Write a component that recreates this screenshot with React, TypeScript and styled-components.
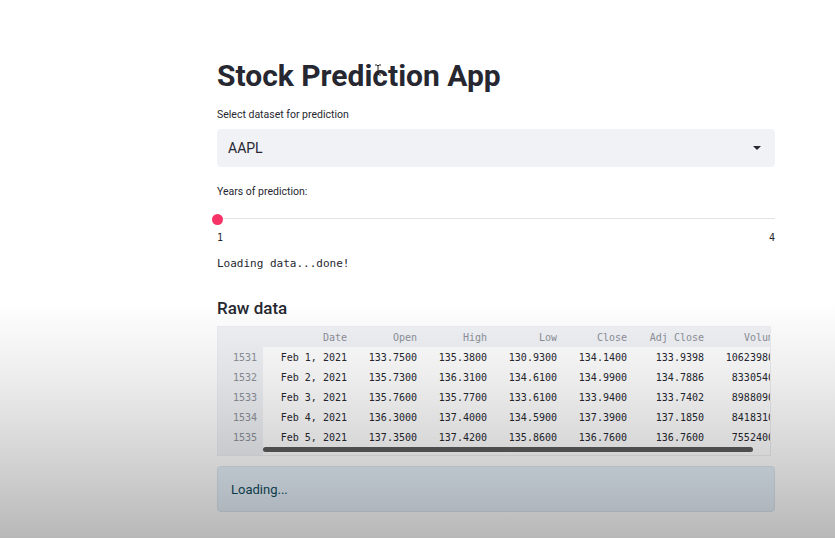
import React from "react";
import styled, { createGlobalStyle } from "styled-components";

const Global = createGlobalStyle`
  html, body { margin: 0; padding: 0; background: #ffffff; }
  body { width: 835px; height: 538px; overflow: hidden; }
  #root { width: 835px; height: 538px; position: relative; }
`;

const Page = styled.div`
  width: 835px;
  height: 538px;
  position: relative;
  background: #ffffff;
  overflow: hidden;
  font-family: Roboto, "Noto Sans", sans-serif;
  color: #262730;
`;

const Main = styled.main`
  width: 558px;
  margin-left: 217px;
  padding-top: 55px;
  display: flex;
  flex-direction: column;
`;

const Title = styled.h1`
  margin: 0;
  font-family: Roboto, "Noto Sans", sans-serif;
  font-size: 30px;
  font-weight: 700;
  line-height: 42px;
  letter-spacing: 0px;
  color: #262730;
`;

const Label = styled.label`
  display: block;
  font-size: 10.5px;
  line-height: 16px;
  color: #262730;
`;

const Field = styled.div<{ $top: number }>`
  margin-top: ${(p) => p.$top}px;
  display: flex;
  flex-direction: column;
`;

const Select = styled.div`
  margin-top: 6px;
  height: 38px;
  border-radius: 4px;
  background: #f0f2f6;
  display: flex;
  align-items: center;
  justify-content: space-between;
  padding: 0 14px 0 11px;
  font-size: 14px;
  color: #262730;
`;

const Caret = styled.span`
  width: 0;
  height: 0;
  border-left: 4px solid transparent;
  border-right: 4px solid transparent;
  border-top: 4px solid #262730;
`;

const SliderWrap = styled.div`
  margin-top: 11px;
  height: 33px;
  display: flex;
  flex-direction: column;
`;

const Track = styled.div`
  position: relative;
  height: 3px;
  margin-top: 7px;
  border-radius: 2px;
  background: #e3e3e6;
`;

const Thumb = styled.span`
  position: absolute;
  left: -5px;
  top: -4px;
  width: 11px;
  height: 11px;
  border-radius: 50%;
  background: #f63366;
`;

const TickRow = styled.div`
  margin-top: 13px;
  display: flex;
  justify-content: space-between;
  font-family: "DejaVu Sans Mono", monospace;
  font-size: 10px;
  line-height: 12px;
  color: #262730;
`;

const Mono = styled.div`
  margin-top: 13px;
  font-family: "DejaVu Sans Mono", monospace;
  font-size: 11px;
  line-height: 14px;
  color: #262730;
`;

const H2 = styled.h2`
  margin: 25px 0 0;
  font-size: 17px;
  font-weight: 500;
  line-height: 24px;
  color: #262730;
`;

const TableFrame = styled.div`
  margin-top: 6px;
  width: 552px;
  height: 128px;
  border: 1px solid #eceef2;
  position: relative;
  overflow: hidden;
  background: #ffffff;
  font-family: "DejaVu Sans Mono", monospace;
  font-size: 10px;
`;

const Grid = styled.div`
  display: grid;
  grid-template-columns: 45px 84px 70px 70px 70px 70px 77px 76px;
  grid-auto-rows: 20px;
`;

const Cell = styled.div<{ $kind: "corner" | "head" | "index" | "data" }>`
  display: flex;
  align-items: center;
  justify-content: flex-end;
  padding-right: ${(p) => (p.$kind === "index" || p.$kind === "corner" ? 6 : 0)}px;
  white-space: nowrap;
  background: ${(p) => (p.$kind === "data" ? "#ffffff" : "#f0f2f6")};
  color: ${(p) => (p.$kind === "data" ? "#262730" : "#8d9099")};
`;

const ScrollBar = styled.div`
  position: absolute;
  left: 45px;
  bottom: 3px;
  width: 490px;
  height: 5px;
  border-radius: 3px;
  background: #5c5c5c;
`;

const IndexFill = styled.div`
  position: absolute;
  left: 0;
  top: 120px;
  width: 45px;
  height: 8px;
  background: #f0f2f6;
`;

const Alert = styled.div`
  margin-top: 10px;
  height: 46px;
  border-radius: 4px;
  background: #e6f0fa;
  border: 1px solid #dbe5ef;
  box-sizing: border-box;
  display: flex;
  align-items: center;
  padding-left: 13px;
  font-size: 13px;
  color: #124c5e;
`;

const Shade = styled.div`
  position: absolute;
  inset: 0;
  pointer-events: none;
  background: linear-gradient(
    to bottom,
    rgba(0, 0, 0, 0) 0%,
    rgba(0, 0, 0, 0) 56%,
    rgba(0, 0, 0, 0.07) 70%,
    rgba(0, 0, 0, 0.17) 85%,
    rgba(0, 0, 0, 0.28) 100%
  );
`;

const Cursor = styled.svg`
  position: absolute;
  left: 374px;
  top: 64px;
  pointer-events: none;
`;

const headers = ["Date", "Open", "High", "Low", "Close", "Adj Close", "Volume"];
const rows = [
  ["1531", "Feb 1, 2021", "133.7500", "135.3800", "130.9300", "134.1400", "133.9398", "106239800"],
  ["1532", "Feb 2, 2021", "135.7300", "136.3100", "134.6100", "134.9900", "134.7886", "83305400"],
  ["1533", "Feb 3, 2021", "135.7600", "135.7700", "133.6100", "133.9400", "133.7402", "89880900"],
  ["1534", "Feb 4, 2021", "136.3000", "137.4000", "134.5900", "137.3900", "137.1850", "84183100"],
  ["1535", "Feb 5, 2021", "137.3500", "137.4200", "135.8600", "136.7600", "136.7600", "75524000"],
];

export default function App() {
  return (
    <Page>
      <Global />
      <Main>
        <Title>Stock Prediction App</Title>
        <Field $top={10}>
          <Label>Select dataset for prediction</Label>
          <Select>
            <span>AAPL</span>
            <Caret />
          </Select>
        </Field>
        <Field $top={17}>
          <Label>Years of prediction:</Label>
          <SliderWrap>
            <Track>
              <Thumb />
            </Track>
            <TickRow>
              <span>1</span>
              <span>4</span>
            </TickRow>
          </SliderWrap>
        </Field>
        <Mono>Loading data...done!</Mono>
        <H2>Raw data</H2>
        <TableFrame>
          <Grid>
            <Cell $kind="corner" />
            {headers.map((h) => (
              <Cell key={h} $kind="head">
                {h}
              </Cell>
            ))}
            {rows.map((r) =>
              r.map((v, i) => (
                <Cell key={r[0] + i} $kind={i === 0 ? "index" : "data"}>
                  {v}
                </Cell>
              ))
            )}
          </Grid>
          <IndexFill />
          <ScrollBar />
        </TableFrame>
        <Alert>Loading...</Alert>
      </Main>
      <Shade />
      <Cursor width="8" height="12" viewBox="0 0 8 12">
        <path d="M1 1h2l1 1 1-1h2M4 2v8M1 11h2l1-1 1 1h2" stroke="#222" strokeWidth="1" fill="none" />
      </Cursor>
    </Page>
  );
}
